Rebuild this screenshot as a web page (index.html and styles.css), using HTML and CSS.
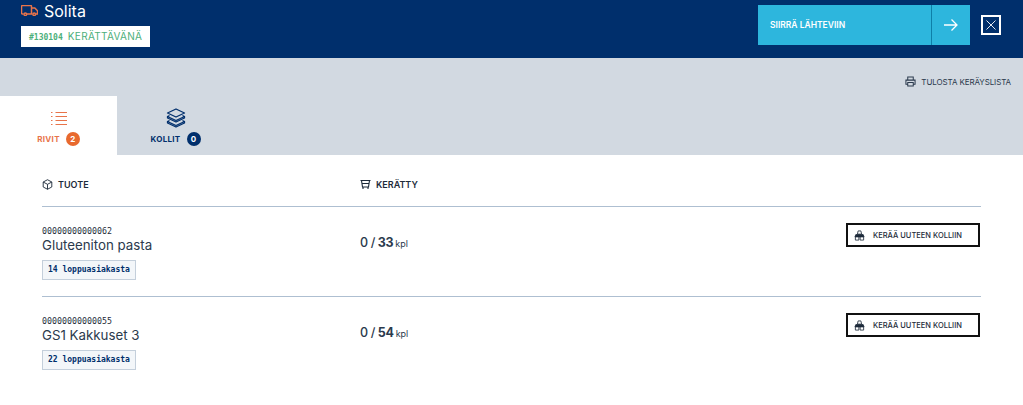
FILE: index.html
```html
<!DOCTYPE html>
<html lang="fi">
<head>
    <meta charset="UTF-8">
    <title>Solita</title>
    <link rel="stylesheet" href="styles.css">
</head>
<body>
    <header class="header">
        <div class="header__info">
            <div class="header__title">
                <svg class="header__truck" viewBox="0 0 17 11" width="17" height="11" fill="none" stroke="#e8744a" stroke-width="1.500"><path d="M2.500 9H1.500a1 1 0 0 1-1-1V1.500a1 1 0 0 1 1-1h8a1 1 0 0 1 1 1V9H6M10.500 3h3.300l2.700 2.700V9h-1.500M10.500 9h1"/><circle cx="4.300" cy="9.200" r="1.300"/><circle cx="13.200" cy="9.200" r="1.300"/></svg>
                <span>Solita</span>
            </div>
            <div class="status"><span class="status__id">#130104</span> KERÄTTÄVÄNÄ</div>
        </div>
        <div class="header__actions">
            <button class="move">
                <span class="move__label">SIIRRÄ LÄHTEVIIN</span>
                <span class="move__arrow">
                    <svg viewBox="0 0 14 12" width="14" height="12" fill="none" stroke="#fff" stroke-width="1.300"><path d="M0 6h13M7.500 .5L13 6l-5.500 5.500"/></svg>
                </span>
            </button>
            <button class="close">
                <svg viewBox="0 0 10 10" width="10" height="10" fill="none" stroke="#fff" stroke-width=".9"><path d="M.5 .5l9 9M9.500 .5l-9 9"/></svg>
            </button>
        </div>
    </header>

    <section class="band">
        <div class="band__print">
            <svg viewBox="0 0 12 12" width="11" height="11" fill="none" stroke="#2b3a4d" stroke-width="1.100"><path d="M3 4V1h6v3M3 9H1V4.500h10V9H9M3 7h6v4H3z"/></svg>
            <span>TULOSTA KERÄYSLISTA</span>
        </div>
        <nav class="tabs">
            <div class="tab tab--active">
                <svg viewBox="0 0 16 20" width="16" height="20" fill="none" stroke="#e8744a" stroke-width="1.100"><path d="M4.500 4.500H16M4.500 8.500H16M4.500 12.500H16M4.500 16.500H16M0 4.500h1.500M0 8.500h1.500M0 12.500h1.500M0 16.500h1.500"/></svg>
                <div class="tab__label">RIVIT <span class="badge badge--orange">2</span></div>
            </div>
            <div class="tab">
                <svg viewBox="0 0 20 20" width="20" height="20" fill="none" stroke="#002f6c" stroke-width="1.300" stroke-linejoin="round"><path d="M10 1l8.500 4L10 9 1.500 5z"/><path d="M3.500 7.500l-2 1V10L10 14l8.500-4V8.500l-2-1M1.500 8.500L10 12.500l8.500-4"/><path d="M3.500 12.500l-2 1V15L10 19l8.500-4v-1.500l-2-1M1.500 13.500L10 17.500l8.500-4"/></svg>
                <div class="tab__label tab__label--navy">KOLLIT <span class="badge badge--navy">0</span></div>
            </div>
        </nav>
    </section>

    <main class="list">
        <div class="list__head">
            <div class="col col--product">
                <svg viewBox="0 0 12 12" width="11" height="11" fill="none" stroke="#1d2b3a" stroke-width="1"><path d="M6 .8l4.700 2.500v5.400L6 11.200 1.300 8.700V3.300zM1.300 3.300L6 5.800l4.700-2.500M6 5.800v5.400"/></svg>
                TUOTE
            </div>
            <div class="col col--picked">
                <svg viewBox="0 0 11 11" width="11" height="11" fill="none" stroke="#1d2b3a" stroke-width="1.100"><path d="M.5 1.500h10M1.500 1.500l1 6.500h6l1-6.500M2 4.500h7M3 8v2M8 8v2"/></svg>
                KERÄTTY
            </div>
        </div>

        <div class="row">
            <div class="col col--product">
                <div class="row__code">00000000000062</div>
                <div class="row__name">Gluteeniton pasta</div>
                <div class="row__tag">14 loppuasiakasta</div>
            </div>
            <div class="col col--picked amount"><span class="amount__done">0 /</span> 33<small>kpl</small></div>
            <button class="collect">
                <svg viewBox="0 0 12 12" width="11" height="11" fill="#1d2b3a" stroke="#1d2b3a" stroke-width=".9"><path fill="none" d="M4.500 1h3l.8 3.500H3.700z"/><path d="M2 5h8l1 2.500H1z"/><path fill="none" d="M1.500 7.500V11h3.800V7.500M6.700 7.500V11h3.800V7.500"/></svg>
                KERÄÄ UUTEEN KOLLIIN
            </button>
        </div>

        <div class="row">
            <div class="col col--product">
                <div class="row__code">00000000000055</div>
                <div class="row__name">GS1 Kakkuset 3</div>
                <div class="row__tag">22 loppuasiakasta</div>
            </div>
            <div class="col col--picked amount"><span class="amount__done">0 /</span> 54<small>kpl</small></div>
            <button class="collect">
                <svg viewBox="0 0 12 12" width="11" height="11" fill="#1d2b3a" stroke="#1d2b3a" stroke-width=".9"><path fill="none" d="M4.500 1h3l.8 3.500H3.700z"/><path d="M2 5h8l1 2.500H1z"/><path fill="none" d="M1.500 7.500V11h3.800V7.500M6.700 7.500V11h3.800V7.500"/></svg>
                KERÄÄ UUTEEN KOLLIIN
            </button>
        </div>
    </main>
</body>
</html>
```

FILE: styles.css
```css
* {
    box-sizing: border-box;
}
body {
    margin: 0;
    font-family: "Inter", "Liberation Sans", sans-serif;
    color: #1d2b3a;
    background-color: #fff;
}
button {
    font-family: inherit;
    padding: 0;
    cursor: pointer;
}

/* Header */
.header {
    height: 58px;
    background-color: #002f6c;
    display: flex;
    justify-content: space-between;
    padding: 0 22px 0 21px;
}
.header__title {
    display: flex;
    align-items: center;
    gap: 6px;
    height: 21px;
    color: #fff;
    font-size: 16px;
    font-weight: 400;
}
.status {
    margin-top: 5px;
    width: 129px;
    height: 21px;
    background-color: #fff;
    color: #4caf7a;
    font-size: 10px;
    line-height: 21px;
    padding-left: 8px;
    white-space: nowrap;
    letter-spacing: 0.3px;
}
.status__id {
    font-family: "DejaVu Sans Mono", monospace;
    font-size: 8px;
    font-weight: bold;
    letter-spacing: 0;
    margin-right: 2px;
}
.header__actions {
    display: flex;
    align-items: flex-start;
}
.move {
    margin-top: 5px;
    width: 212px;
    height: 40px;
    display: flex;
    border: 0;
    background-color: #2db6dd;
    color: #fff;
}
.move__label {
    flex: 1;
    text-align: left;
    padding-left: 12px;
    font-size: 8.500px;
    font-weight: 600;
    line-height: 40px;
}
.move__arrow {
    width: 39px;
    height: 40px;
    border-left: 1px solid #0e7fa8;
    display: flex;
    align-items: center;
    justify-content: center;
}
.close {
    margin: 15px 0 0 11px;
    width: 20px;
    height: 20px;
    border: 2px solid #fff;
    background-color: #002f6c;
    display: flex;
    align-items: center;
    justify-content: center;
}

/* Gray band with tabs */
.band {
    height: 97px;
    background-color: #d2d9e1;
    display: flex;
    flex-direction: column;
    justify-content: space-between;
}
.band__print {
    align-self: flex-end;
    display: flex;
    align-items: center;
    gap: 5px;
    margin: 18px 12px 0 0;
    font-size: 8px;
    letter-spacing: -0.1px;
    color: #2b3a4d;
}
.tabs {
    display: flex;
}
.tab {
    width: 117px;
    height: 59px;
    display: flex;
    flex-direction: column;
    align-items: center;
    gap: 4px;
    padding-top: 12px;
}
.tab--active {
    background-color: #fff;
}
.tab__label {
    display: flex;
    align-items: center;
    gap: 6px;
    font-size: 8px;
    font-weight: 700;
    letter-spacing: 0.3px;
    color: #e8744a;
}
.tab__label--navy {
    color: #002f6c;
}
.badge {
    width: 14px;
    height: 14px;
    border-radius: 50%;
    color: #fff;
    font-size: 8px;
    font-weight: 700;
    text-align: center;
    line-height: 14px;
    letter-spacing: 0;
}
.badge--orange {
    background-color: #e8692e;
}
.badge--navy {
    background-color: #002f6c;
}

/* List */
.list {
    padding: 0 42px;
}
.list__head {
    height: 52px;
    display: flex;
    align-items: center;
    border-bottom: 1px solid #aebfd1;
    font-size: 9px;
    font-weight: 600;
    padding-top: 7px;
}
.list__head .col {
    display: flex;
    align-items: center;
    gap: 5px;
}
.col--product {
    width: 318px;
}
.row {
    height: 90px;
    display: flex;
    align-items: flex-start;
    border-bottom: 1px solid #aebfd1;
    padding-top: 19px;
}
.row:last-child {
    border-bottom: 0;
}
.row__code {
    font-family: "DejaVu Sans Mono", monospace;
    font-size: 8.300px;
    line-height: 11px;
}
.row__name {
    font-size: 13.300px;
    line-height: 17px;
    color: #2b3a4d;
}
.row__tag {
    margin-top: 6px;
    width: 94px;
    height: 20px;
    border: 1px solid #c4cfdb;
    background-color: #f3f6f9;
    color: #002f6c;
    font-family: "DejaVu Sans Mono", monospace;
    font-size: 8px;
    font-weight: bold;
    line-height: 18px;
    padding-left: 5px;
}
.amount {
    margin-top: 9px;
    font-size: 12.500px;
    font-weight: 700;
    letter-spacing: -0.3px;
    color: #2b3a4d;
}
.amount__done {
    font-weight: 500;
}
.amount small {
    margin-left: 2px;
    font-size: 9px;
    font-weight: 400;
    letter-spacing: 0;
}
.collect {
    margin: -3px 1px 0 auto;
    width: 134px;
    height: 24px;
    border: 2px solid #111;
    background-color: #fff;
    display: flex;
    align-items: center;
    gap: 8px;
    padding-left: 6px;
    font-size: 7.500px;
    font-weight: 500;
    color: #1d2b3a;
}
```
